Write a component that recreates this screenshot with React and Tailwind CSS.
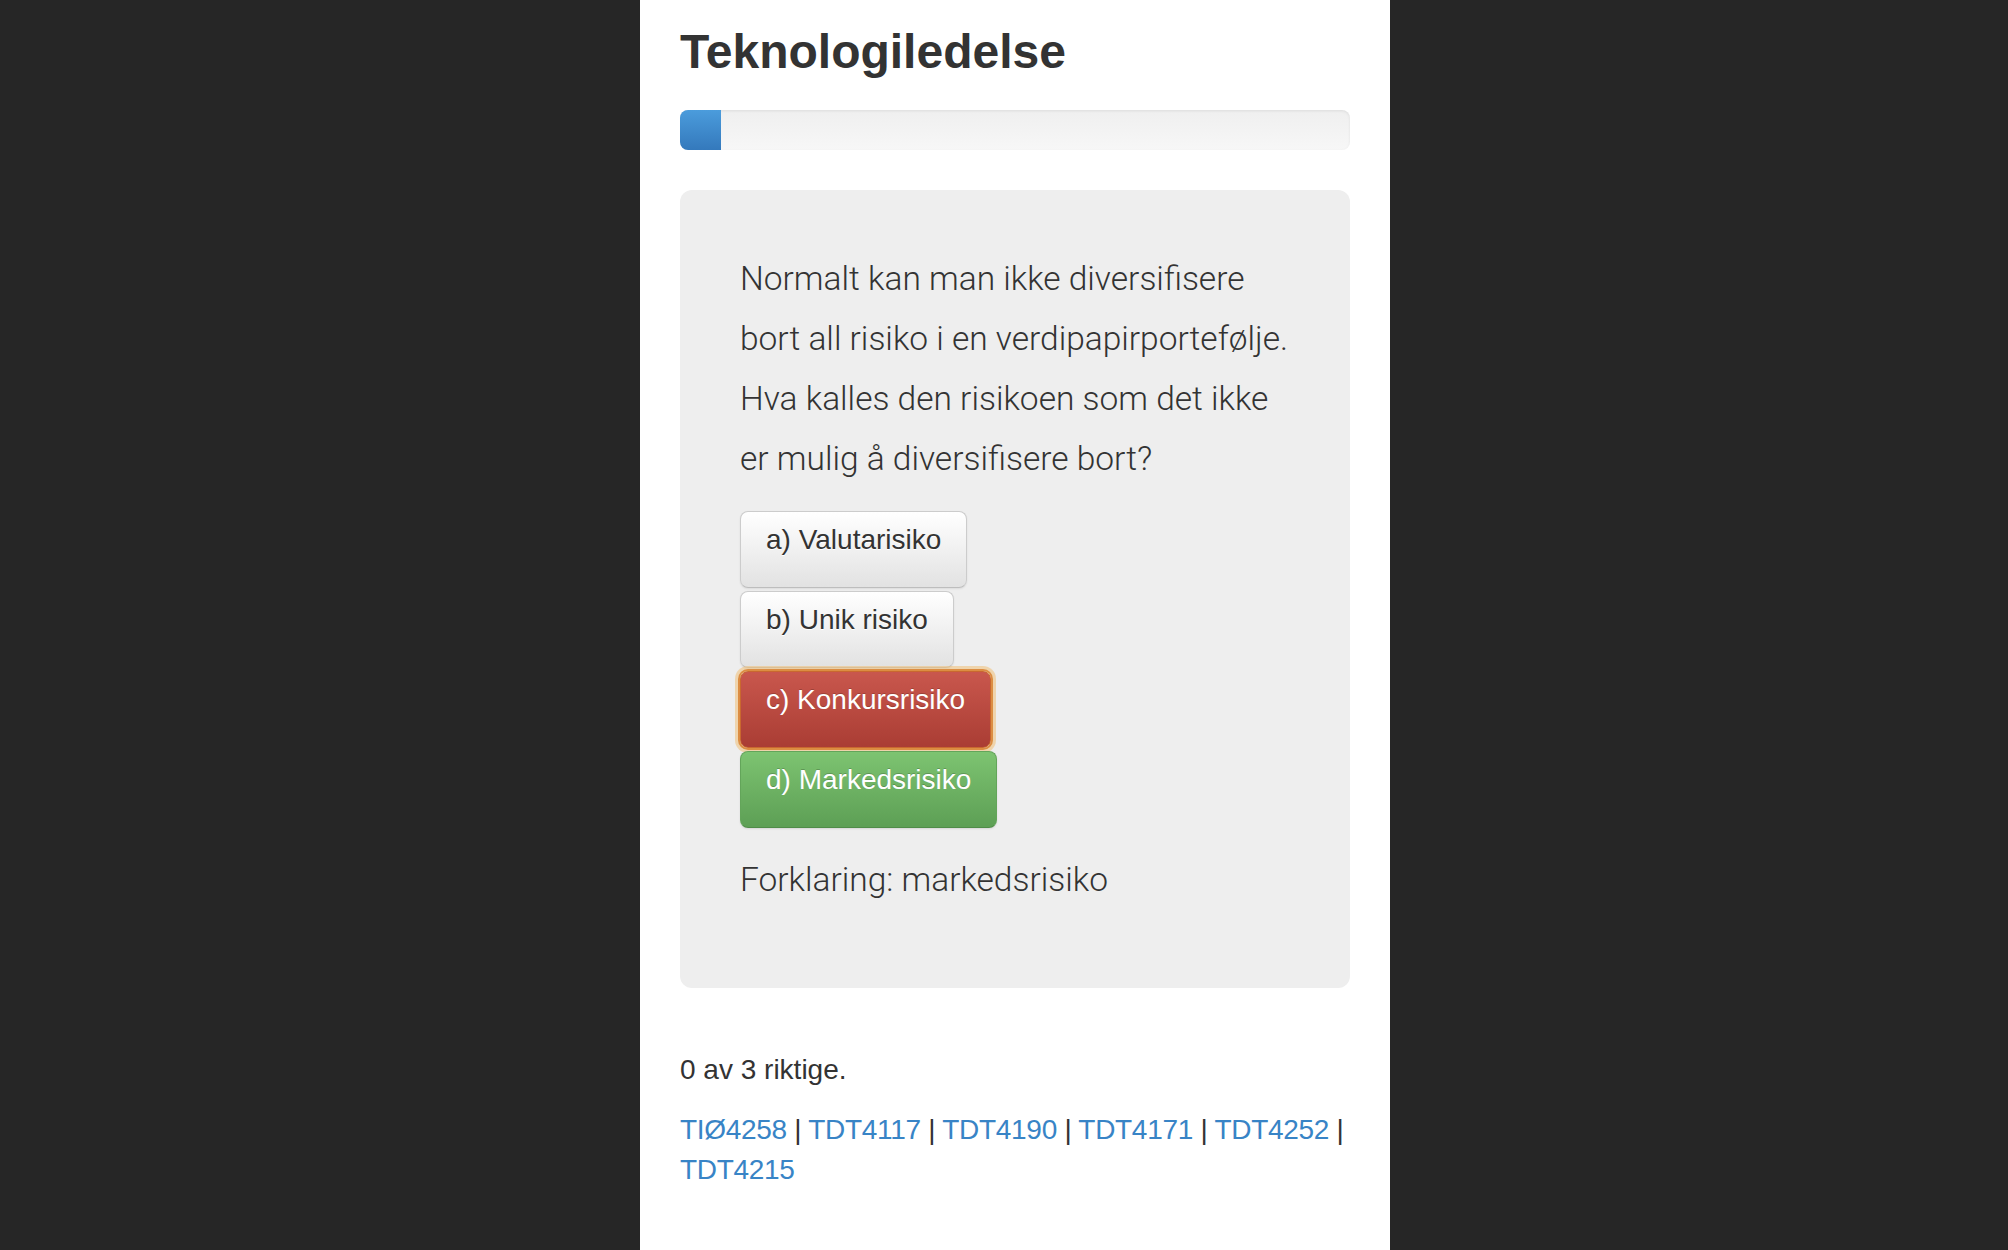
import React from "react";

const courses = ["TIØ4258", "TDT4117", "TDT4190", "TDT4171", "TDT4252", "TDT4215"];

const answers = [
  { label: "a) Valutarisiko", kind: "default" },
  { label: "b) Unik risiko", kind: "default" },
  { label: "c) Konkursrisiko", kind: "wrong" },
  { label: "d) Markedsrisiko", kind: "right" },
];

function AnswerButton({ label, kind }) {
  let look =
    "bg-gradient-to-b from-[#ffffff] to-[#e2e2e2] border-[#cccccc] border-b-[#bdbdbd] text-[#333333] [text-shadow:0_1px_0_#fff] shadow-[0_1px_2px_rgba(0,0,0,0.08)]";
  if (kind === "wrong") {
    look =
      "bg-gradient-to-b from-[#c9574d] to-[#aa3d34] border-[#c9682f] text-white [text-shadow:0_-1px_0_rgba(0,0,0,0.2)] shadow-[0_0_0_2px_#dc8d42,0_0_0_5px_rgba(240,192,118,0.55)]";
  }
  if (kind === "right") {
    look =
      "bg-gradient-to-b from-[#7dc471] to-[#5d9f55] border-[#63a55a] border-b-[#4f8c48] text-white [text-shadow:0_-1px_0_rgba(0,0,0,0.2)] shadow-[0_1px_2px_rgba(0,0,0,0.1)]";
  }
  return (
    <button
      className={
        "h-[77px] px-[25px] pt-[8px] flex items-start text-left text-[28px] leading-[40px] border rounded-[8px] " +
        look
      }
    >
      {label}
    </button>
  );
}

export default function App() {
  return (
    <div className="min-h-screen bg-[#262626] font-['Liberation_Sans',Arial,sans-serif] text-[#333333]">
      <div className="ml-[640px] w-[750px] min-h-screen bg-white px-[40px] pt-[25px] pb-[40px]">
        <h1 className="text-[48px] leading-[53px] font-bold text-[#333333]">Teknologiledelse</h1>

        <div className="mt-[32px] h-[40px] rounded-[8px] bg-gradient-to-b from-[#efefef] to-[#f7f7f7] shadow-[inset_0_1px_3px_rgba(0,0,0,0.08)] flex overflow-hidden">
          <div className="w-[41px] h-full bg-gradient-to-b from-[#4b9cdc] to-[#3479bc]"></div>
        </div>

        <div className="mt-[40px] rounded-[12px] bg-[#eeeeee] px-[60px] pt-[59px] pb-[78px]">
          <p className="font-['Roboto',Arial,sans-serif] font-light text-[33.5px] leading-[60px] text-[#333333] whitespace-nowrap">
            Normalt kan man ikke diversifisere
            <br />
            bort all risiko i en verdipapirportefølje.
            <br />
            Hva kalles den risikoen som det ikke
            <br />
            er mulig å diversifisere bort?
          </p>

          <div className="mt-[22px] flex flex-col items-start gap-[3px]">
            {answers.map((a) => (
              <AnswerButton key={a.label} label={a.label} kind={a.kind} />
            ))}
          </div>

          <p className="mt-[22px] font-['Roboto',Arial,sans-serif] font-light text-[33.5px] leading-[60px] text-[#333333]">
            Forklaring: markedsrisiko
          </p>
        </div>

        <div className="mt-[62px] text-[28px] leading-[40px]">
          <p>0 av 3 riktige.</p>
          <p className="mt-[20px] tracking-[-0.3px]">
            {courses.map((c, i) => (
              <span key={c}>
                <a href="#" className="text-[#3884c6]">
                  {c}
                </a>
                {i < courses.length - 1 ? " | " : ""}
              </span>
            ))}
          </p>
        </div>
      </div>
    </div>
  );
}
